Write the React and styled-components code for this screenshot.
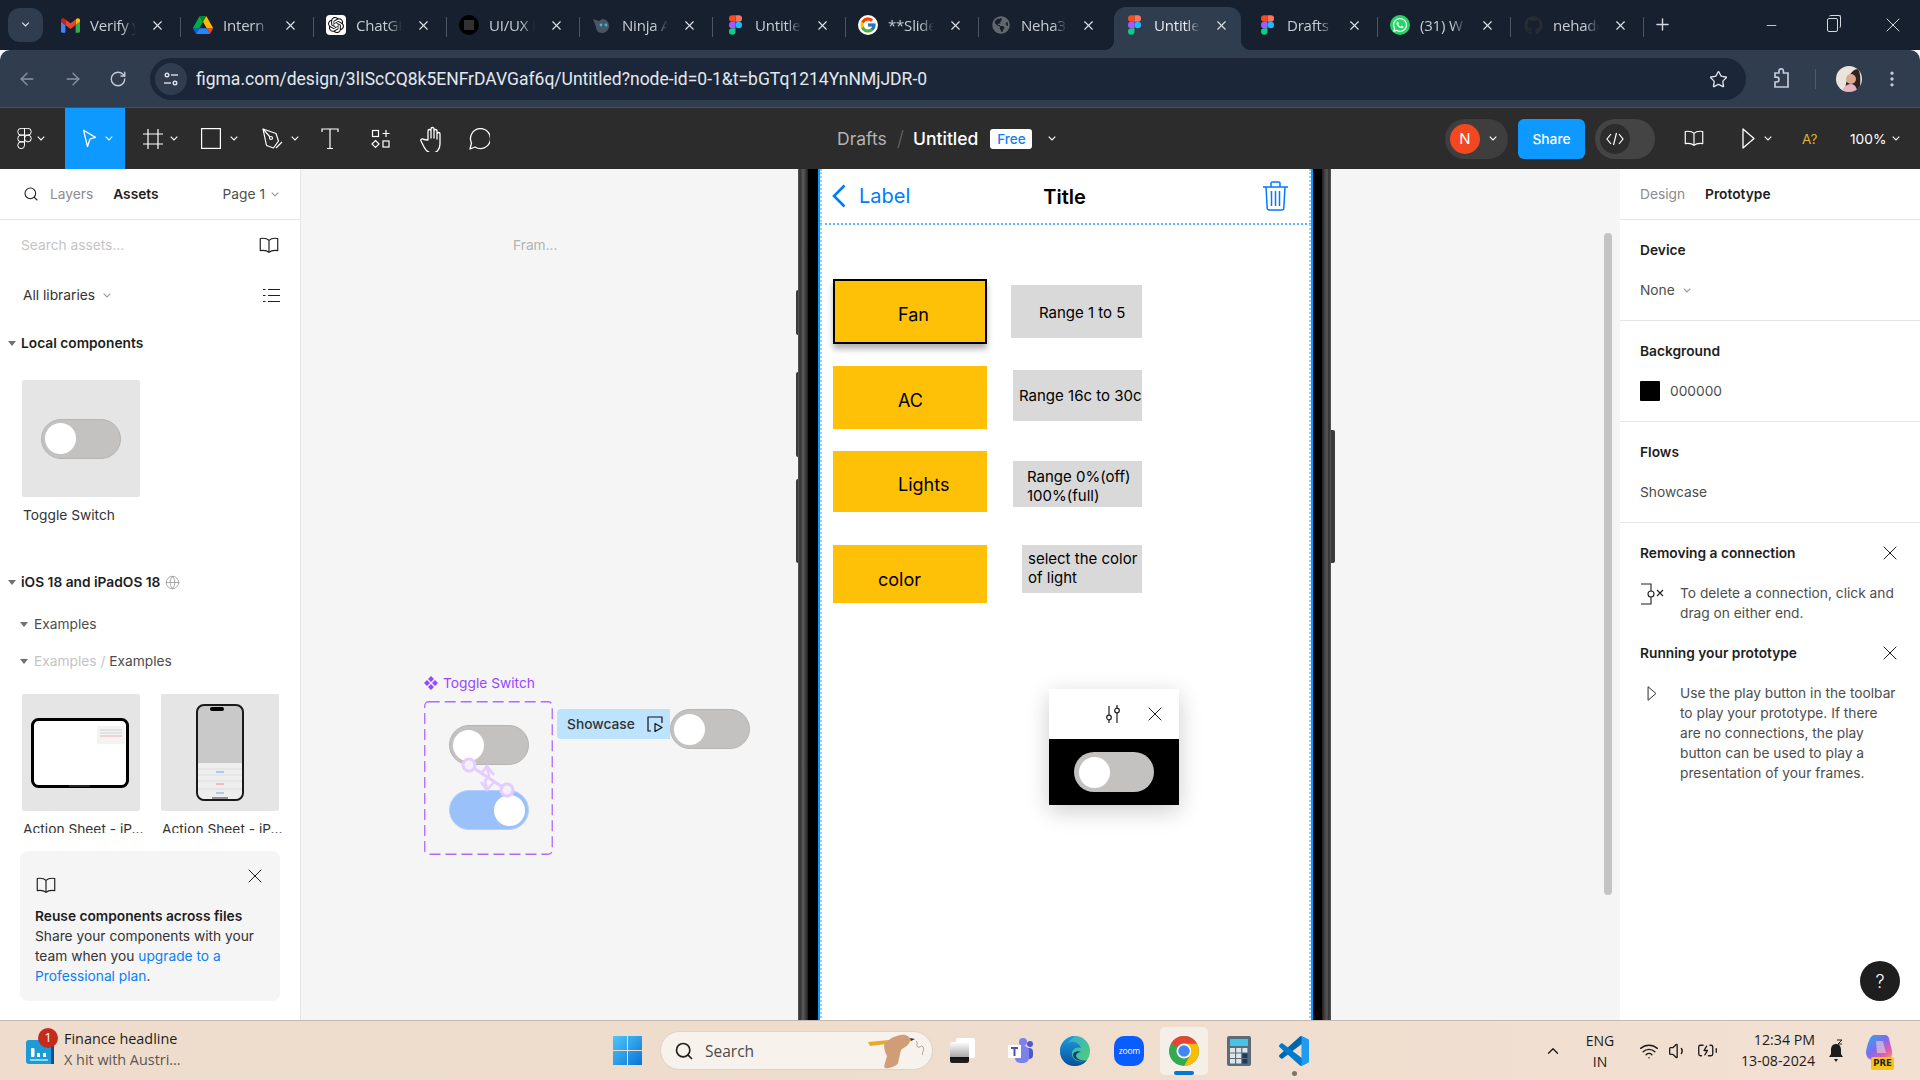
import React from "react";
import styled, { createGlobalStyle, css } from "styled-components";
import { ArrowLeft, ArrowRight, RotateCw, Star, MoreVertical, Plus, Minus, X, Search, Wifi, Volume1, BatteryCharging, ChevronUp, Globe } from "lucide-react";
import { FcGoogle } from "react-icons/fc";
import { SiOpenai } from "react-icons/si";
import { FaWhatsapp, FaGithub, FaGlobeAmericas } from "react-icons/fa";

const Global = createGlobalStyle`
  html, body { margin: 0; padding: 0; width: 1920px; height: 1080px; overflow: hidden; background: #f5f5f5; }
  * { box-sizing: border-box; }
  svg { display: block; flex: none; }
`;

const UI = `Inter, "Liberation Sans", sans-serif`;
const SYS = `"Open Sans", "Noto Sans", sans-serif`;

const Page = styled.div`
  width: 1920px; height: 1080px; display: flex; flex-direction: column; overflow: hidden; font-family: ${UI};
`;

/* ---------- Chrome tab strip ---------- */
const TabStrip = styled.div`
  height: 50px; flex: none; background: #16202f; display: flex; align-items: center; padding-left: 8px;
`;
const TabMenu = styled.div`
  width: 35px; height: 34px; border-radius: 12px; background: #303d4f; display: flex; align-items: center; justify-content: center; margin-right: 5px; margin-top: -1px;
`;
const Tab = styled.div`
  width: 133px; height: 43px; margin-top: 7px; position: relative; display: flex; align-items: center; padding: 0 0 7px 12px; color: #c7cdd6;
  ${p => p.$sep && css`
    &::after { content: ""; position: absolute; right: 0; top: 10px; height: 20px; width: 1px; background: #4b5665; }
  `}
  ${p => p.$active && css`
    color: #e6eaef; background: #303d4f; border-radius: 12px 12px 0 0; padding-left: 10px; width: 127px; margin: 7px 4px 0 2px;
    &::before { content: ""; position: absolute; left: -10px; bottom: 0; width: 10px; height: 10px; background: radial-gradient(circle at 0 0, #16202f 10px, #303d4f 10.5px); }
    &::after { content: ""; position: absolute; right: -10px; bottom: 0; width: 10px; height: 10px; background: radial-gradient(circle at 100% 0, #16202f 10px, #303d4f 10.5px); }
  `}
`;
const TabIcon = styled.span`
  width: 20px; height: 20px; flex: none; display: flex; align-items: center; justify-content: center;
`;
const TabTitle = styled.span`
  width: 46px; margin-left: 10px; font: 15px/20px ${SYS}; white-space: nowrap; letter-spacing: -.2px;
  -webkit-mask-image: linear-gradient(to right, #000 70%, transparent 100%); mask-image: linear-gradient(to right, #000 70%, transparent 100%);
`;
const TabClose = styled.span`
  margin-left: 14px; display: flex; color: #dfe3e8;
`;
const WindowControls = styled.div`
  margin-left: auto; display: flex; align-items: center; color: #d5d9df; height: 100%; padding-right: 20px; gap: 48px;
`;
const NewTab = styled.span`
  display: flex; color: #d5d9df; margin-left: 9px; margin-top: -1px;
`;
const Restore = styled.span`
  width: 11px; height: 14px; border: 1.4px solid #d5d9df; border-radius: 2px; position: relative; display: block;
  &::after { content: ""; position: absolute; top: -4px; left: 1px; right: -4px; bottom: 3px; border-top: 1.4px solid #d5d9df; border-right: 1.4px solid #d5d9df; border-radius: 2px; }
`;

/* ---------- Omnibox ---------- */
const Omni = styled.div`
  height: 58px; flex: none; background: #303d4f; border-radius: 10px 10px 0 0; border-bottom: 1px solid #4b5058; display: flex; align-items: flex-start; padding-top: 8px; color: #8a94a2;
`;
const NavIcons = styled.div`
  width: 150px; height: 42px; flex: none; display: flex; align-items: center; padding-left: 17px; gap: 26px;
`;
const AddressBar = styled.div`
  width: 1596px; height: 42px; border-radius: 21px; background: #1b2738; display: flex; align-items: center; padding: 0 18px 0 5px; flex: none;
`;
const SiteChip = styled.div`
  width: 32px; height: 32px; border-radius: 50%; background: #303d4f; display: flex; align-items: center; justify-content: center; flex: none; margin-right: 9px;
`;
const Url = styled.div`
  flex: 1; color: #e4e8ee; font: 17.5px/22px Roboto, sans-serif; letter-spacing: 0; white-space: nowrap;
`;
const BrowserActions = styled.div`
  height: 42px; flex: 1; display: flex; align-items: center; padding-left: 26px; color: #c5ccd6;
`;
const ActionSep = styled.span`
  width: 1px; height: 20px; background: #4f5b6b; margin: 0 20px 0 23px;
`;
const Avatar = styled.span`
  width: 26px; height: 26px; border-radius: 50%; overflow: hidden; display: block; margin-right: 20px; flex: none;
`;

/* ---------- Figma toolbar ---------- */
const FigmaBar = styled.div`
  height: 61px; flex: none; background: #2c2c2c; display: grid; grid-template-columns: 837px 608px 475px; align-items: center; color: #fff;
`;
const Tools = styled.div`
  display: flex; align-items: center; height: 61px;
`;
const ToolCell = styled.div`
  width: ${p => p.$w}px; height: 61px; padding-left: ${p => p.$pl}px; gap: ${p => p.$gap ?? 8}px; display: flex; align-items: center; flex: none; background: ${p => (p.$active ? "#0d99ff" : "transparent")};
`;
const Crumbs = styled.div`
  display: flex; align-items: center; font-size: 17.5px;
`;
const CrumbMuted = styled.span`
  color: #b3b3b3;
`;
const CrumbSlash = styled.span`
  color: #5f5f5f; margin: 0 9px 0 10px; font-weight: 300; font-size: 21px;
`;
const CrumbTitle = styled.span`
  color: #fff; font-weight: 500;
`;
const FreeBadge = styled.span`
  width: 42px; height: 20px; background: #fff; color: #0d7ff2; border-radius: 3px; font-size: 13.5px; font-weight: 500; display: flex; align-items: center; justify-content: center; margin: 0 16px 0 12px;
`;
const RightTools = styled.div`
  display: flex; align-items: center; height: 61px;
`;
const UserPill = styled.div`
  width: 63px; height: 40px; border-radius: 20px; background: #3e3e3e; display: flex; align-items: center; padding-left: 5px; gap: 9px; flex: none;
`;
const UserDot = styled.span`
  width: 30px; height: 30px; border-radius: 50%; background: #f24822; color: #fff; font-size: 15px; display: flex; align-items: center; justify-content: center;
`;
const ShareBtn = styled.div`
  width: 67px; height: 40px; border-radius: 6px; background: #0d99ff; color: #fff; font-size: 13.75px; font-weight: 500; display: flex; align-items: center; justify-content: center; margin: 0 10px; flex: none;
`;
const CodeToggle = styled.div`
  width: 60px; height: 40px; border-radius: 20px; background: #444; display: flex; align-items: center; padding-left: 5px; flex: none;
`;
const CodeKnob = styled.span`
  width: 30px; height: 30px; border-radius: 50%; background: #2c2c2c; color: #fff; display: flex; align-items: center; justify-content: center;
`;
const AskBadge = styled.span`
  color: #e0b32c; font-size: 13.5px; margin-left: 24px; width: 19px;
`;
const ZoomText = styled.span`
  color: #fff; font-size: 13.75px; margin-left: 29px; margin-right: 6px;
`;

/* ---------- Workspace ---------- */
const Workspace = styled.div`
  flex: 1; display: flex; min-height: 0;
`;
const SidePanel = styled.aside`
  width: ${p => p.$w}px; flex: none; background: #fff; position: relative; color: #333; font-size: 13.75px;
  ${p => p.$left ? "border-right: 1px solid #e6e6e6;" : ""}
`;
const PanelHead = styled.div`
  height: 51px; border-bottom: 1.5px solid #e6e6e6; display: flex; align-items: center; padding-left: ${p => p.$pl}px;
`;
const TabLabel = styled.span`
  color: ${p => (p.$on ? "#1e1e1e" : "#8c8c8c")}; font-weight: ${p => (p.$on ? 600 : 400)}; margin-left: ${p => p.$ml ?? 0}px;
`;
const PageSelect = styled.span`
  margin-left: auto; margin-right: 21px; color: #4d4d4d; display: flex; align-items: center; gap: 6px;
`;
const ToolRow = styled.div`
  height: 50px; display: flex; align-items: center; justify-content: space-between; padding: 0 20px 0 ${p => p.$pl ?? 22}px;
`;
const Placeholder = styled.span`
  color: #c4c4c4;
`;
const LibSelect = styled.span`
  color: #333; display: flex; align-items: center; gap: 8px;
`;
const TreeHead = styled.div`
  height: ${p => p.$h ?? 24}px; margin-top: ${p => p.$mt ?? 0}px; padding-left: ${p => p.$pl ?? 8}px; display: flex; align-items: center; gap: ${p => p.$gap ?? 5}px; font-weight: ${p => (p.$bold ? 600 : 400)}; color: ${p => (p.$bold ? "#1e1e1e" : "#4d4d4d")};
`;
const Caret = styled.span`
  width: 0; height: 0; border-left: 4px solid transparent; border-right: 4px solid transparent; border-top: 5px solid #707070; flex: none;
`;
const Faint = styled.span`
  color: #c4c4c4;
`;
const AssetGrid = styled.div`
  display: flex; gap: 21px; padding-left: 22px; margin-top: ${p => p.$mt}px; height: ${p => p.$h}px; overflow: hidden;
`;
const AssetCard = styled.div`
  width: 118px; flex: none;
`;
const AssetThumb = styled.div`
  width: 118px; height: 117px; background: #e5e5e5; border-radius: 2px; display: flex; align-items: center; justify-content: center;
`;
const AssetName = styled.div`
  margin: 10px 0 0 1px; line-height: 16px; white-space: nowrap; color: #333; width: 120px;
`;
const TipCard = styled.div`
  margin: 18px 20px 0; height: 150px; border-radius: 8px; background: #f5f5f5; padding: 26px 15px 0; position: relative; line-height: 20px;
`;
const TipClose = styled.span`
  position: absolute; right: 18px; top: 18px; color: #1e1e1e;
`;
const TipTitle = styled.div`
  font-weight: 600; color: #1e1e1e; margin-top: 12px; white-space: nowrap;
`;
const TipLink = styled.span`
  color: #0d7ff2;
`;

/* right panel */
const PropSection = styled.section`
  padding: 20px 20px; border-bottom: 1.5px solid #e6e6e6; display: flex; flex-direction: column; gap: 20px; line-height: 20px;
`;
const PropTitle = styled.div`
  font-weight: 600; color: #1e1e1e;
`;
const PropValue = styled.div`
  color: #4d4d4d; display: flex; align-items: center; gap: ${p => p.$gap ?? 8}px;
`;
const Swatch = styled.span`
  width: 20px; height: 20px; background: #000; border-radius: 1px;
`;
const HintHead = styled.div`
  display: flex; align-items: center; justify-content: space-between; padding: ${p => p.$pt}px 23px 0 20px; font-weight: 600; color: #1e1e1e; line-height: 20px;
`;
const HintBody = styled.div`
  display: grid; grid-template-columns: 40px 1fr; padding: 20px 20px 0; line-height: 20px; color: #4d4d4d; white-space: nowrap;
`;
const HintIcon = styled.span`
  display: block; margin: ${p => p.$mt ?? 0}px 0 0 ${p => p.$ml ?? 0}px;
`;
const HelpBtn = styled.div`
  position: absolute; right: 20px; bottom: 19px; width: 40px; height: 40px; border-radius: 50%; background: #1e1e1e; color: #fff; font-size: 18px; font-weight: 300; display: flex; align-items: center; justify-content: center;
`;

/* ---------- Canvas ---------- */
const Canvas = styled.main`
  flex: 1; position: relative; background: #f5f5f5; overflow: hidden;
`;
const Node = styled.div`
  position: absolute; left: ${p => p.$x}px; top: ${p => p.$y}px;
`;
const FrameName = styled(Node)`
  color: #b3b3b3; font-size: 13.75px; line-height: 16px;
`;
const ComponentLabel = styled(Node)`
  color: #9747ff; font-size: 13.75px; line-height: 18px; display: flex; align-items: center; gap: 5px;
`;
const VariantSet = styled(Node)`
  width: 129px; height: 154px; display: flex; flex-direction: column; align-items: center; padding-top: 24px; gap: 25px;
`;
const DashOutline = styled.svg`
  position: absolute; left: 0; top: 0;
`;
const Toggle = styled.div`
  width: 80px; height: 40px; border-radius: 20px; flex: none; padding: 0 ${p => (p.$plain ? 5 : 3)}px; display: flex; align-items: center;
  justify-content: ${p => (p.$on ? "flex-end" : "flex-start")};
  background: ${p => (p.$on ? "#9bc1fb" : "#c4c2c0")};
  border: ${p => (p.$plain ? "none" : `1px solid ${p.$on ? "#b4d1fd" : "#b7b5b3"}`)};
`;
const Knob = styled.span`
  width: 31px; height: 31px; border-radius: 50%; background: #fff;
`;
const Connector = styled.svg`
  position: absolute; left: ${p => p.$x}px; top: ${p => p.$y}px;
`;
const FlowTag = styled(Node)`
  width: 113px; height: 30px; background: #bde3ff; border-radius: 4px 0 0 4px; padding: 0 7px 0 10px; display: flex; align-items: center; justify-content: space-between; color: #333; font-weight: 500; font-size: 13.75px;
`;

const Phone = styled(Node)`
  width: 533px; height: 860px; display: flex; padding: 0 9px 0 10px; background: linear-gradient(to right, #5a5a5a 0, #303030 2px, #5c5c5c 5px, #383838 8px, #1c1c1c 10px, #1c1c1c calc(100% - 9px), #3a3a3a calc(100% - 7px), #585858 calc(100% - 4px), #2e2e2e calc(100% - 2px), #5a5a5a 100%);
`;
const PhoneBlack = styled.div`
  flex: 1; background: #000; padding: 0 9px 0 10px; display: flex;
`;
const Screen = styled.div`
  flex: 1; background: #fff; border-left: 2px solid #0d99ff; border-right: 2px solid #0d99ff; position: relative; display: flex; flex-direction: column;
  &::after { content: ""; position: absolute; inset: 0; border-left: 2px dotted #8ed0ff; border-right: 2px dotted #8ed0ff; pointer-events: none; }
`;
const SideKey = styled(Node)`
  width: 4px; height: ${p => p.$h}px; background: #3a3a3a; border-radius: ${p => (p.$right ? "0 2px 2px 0" : "2px 0 0 2px")};
`;
const NavBar = styled.div`
  height: 56px; border-bottom: 2px dotted #56b4f5; display: grid; grid-template-columns: 1fr auto 1fr; align-items: center; padding: 0 14px 0 12px; color: #007aff; flex: none;
`;
const NavBack = styled.div`
  display: flex; align-items: center; gap: 13px; font-size: 20px;
`;
const NavTitle = styled.div`
  color: #000; font-size: 20px; font-weight: 600; padding-top: 1px;
`;
const NavTrash = styled.div`
  justify-self: end; margin-right: 9px;
`;
const PresetBtn = styled(Node)`
  width: 154px; height: ${p => p.$h}px; background: #ffc107; color: #000; font-size: 18px; display: flex; align-items: center; padding-left: ${p => p.$pl}px; padding-top: ${p => p.$pt}px;
  ${p => p.$sel && css`border: 2px solid #000; box-shadow: 0 5px 6px rgba(0,0,0,.3);`}
`;
const RangeNote = styled(Node)`
  width: ${p => p.$w}px; height: ${p => p.$h}px; background: #d9d9d9; color: #000; font-size: 15px; line-height: 19px; display: flex; align-items: center; padding: ${p => p.$pt ?? 0}px 0 ${p => p.$pb ?? 0}px ${p => p.$pl}px; white-space: pre;
`;
const PreviewPopup = styled(Node)`
  width: 130px; height: 116px; box-shadow: 0 6px 22px rgba(0,0,0,.2); display: flex; flex-direction: column;
`;
const PopupHead = styled.div`
  height: 50px; background: #fff; display: flex; align-items: center; justify-content: flex-end; gap: 27px; padding-right: 17px; color: #1e1e1e;
`;
const PopupBody = styled.div`
  flex: 1; background: #000; display: flex; align-items: center; justify-content: center;
`;
const Scrollbar = styled(Node)`
  width: 8px; height: 662px; border-radius: 4px; background: #c4c4c4;
`;

/* ---------- Taskbar ---------- */
const Taskbar = styled.footer`
  height: 60px; flex: none; display: flex; align-items: center; background: linear-gradient(90deg, #efdccc, #eedccd 40%, #f2e1d2); border-top: 1px solid #c7b8ab; padding-left: 26px; color: #1c1c1c; font-family: ${SYS};
`;
const NewsWidget = styled.div`
  width: 587px; display: flex; align-items: center; flex: none;
`;
const NewsIcon = styled.div`
  position: relative; width: 28px; height: 24px; margin-right: 10px; margin-top: 2px;
`;
const NewsBadge = styled.span`
  position: absolute; left: 12px; top: -12px; width: 20px; height: 20px; border-radius: 50%; background: #c42b1c; color: #fff; font-size: 12.5px; display: flex; align-items: center; justify-content: center;
`;
const NewsText = styled.div`
  font-size: 14.4px; line-height: 20.5px; white-space: nowrap; margin-top: -2px;
`;
const NewsSub = styled.div`
  color: #5c5650;
`;
const SearchPill = styled.div`
  width: 273px; height: 39px; border-radius: 20px; background: #f8f2ec; border: 1px solid #ddd2c8; margin-left: 18px; display: flex; align-items: center; padding-left: 13px; flex: none; font-size: 15.5px; color: #4a4a4a; gap: 11px;
`;
const PillArt = styled.span`
  margin-left: auto; margin-right: 6px;
`;
const TaskItems = styled.div`
  display: flex; gap: 6.8px; margin-left: 5px;
`;
const TaskItem = styled.div`
  width: 48px; height: 48px; border-radius: 5px; position: relative; display: flex; align-items: center; justify-content: center; margin-right: ${p => p.$mr ?? 0}px; background: ${p => (p.$active ? "#f6efe8" : "transparent")};
  ${p => p.$active && css`&::after { content: ""; position: absolute; left: 14px; bottom: 0; width: 20px; height: 4px; border-radius: 2px; background: #0078d4; }`}
  ${p => p.$open && css`&::after { content: ""; position: absolute; left: 22px; bottom: -1px; width: 5px; height: 5px; border-radius: 50%; background: #7a7570; }`}
`;
const Tray = styled.div`
  margin-left: auto; display: flex; align-items: center; padding-right: 27px; color: #1c1c1c;
`;
const Lang = styled.div`
  width: 40px; margin: 0 19px 0 18px; text-align: center; font-size: 14px; line-height: 21px;
`;
const Clock = styled.div`
  width: 90px; margin: -2px 13px 0 0; text-align: right; font-size: 14.2px; line-height: 21px; white-space: nowrap;
`;
const TrayGroup = styled.div`
  display: flex; align-items: center; gap: 9px; width: 86px;
`;
const Copilot = styled.div`
  position: relative; width: 28px; height: 32px; margin-left: 21px;
`;
const PreBadge = styled.span`
  position: absolute; left: 6px; bottom: -3px; width: 23px; height: 13px; background: #f5c518; border-radius: 2px; font: 700 8.5px/13px "DejaVu Sans", sans-serif; color: #222; text-align: center;
`;

/* ---------- Icons ---------- */
const Chev = ({ c = "#fff", w = 8 }) => (
  <svg width={w} height={5} viewBox="0 0 8 5" fill="none"><path d="M.7.7 4 4l3.3-3.3" stroke={c} strokeWidth="1.1" /></svg>
);
const Gmail = () => (
  <svg width="19" height="15" viewBox="0 0 24 18">
    <path d="M1.6 18H5.5V8.5L0 4.4V16.4C0 17.3.7 18 1.6 18z" fill="#4285F4" />
    <path d="M18.5 18h3.9c.9 0 1.6-.7 1.6-1.6V4.4l-5.5 4.1z" fill="#34A853" />
    <path d="M18.5 1.4v7.1L24 4.4V2.2c0-2-2.3-3.2-3.9-2z" fill="#FBBC04" />
    <path d="M5.5 8.5V1.4L12 6.3l6.5-4.9v7.1L12 13.4z" fill="#EA4335" />
    <path d="M0 2.2v2.2l5.5 4.1V1.4L3.9.2C2.3-1 0 .2 0 2.2z" fill="#C5221F" />
  </svg>
);
const Drive = () => (
  <svg width="20" height="18" viewBox="0 0 87.3 78">
    <path d="m6.6 66.85 3.85 6.65c.8 1.4 1.95 2.5 3.3 3.3l13.75-23.8h-27.5c0 1.55.4 3.1 1.2 4.5z" fill="#0066da" />
    <path d="m43.65 25-13.75-23.8c-1.35.8-2.5 1.9-3.3 3.3l-25.4 44a9.06 9.06 0 0 0 -1.2 4.5h27.5z" fill="#00ac47" />
    <path d="m73.55 76.8c1.35-.8 2.5-1.9 3.3-3.3l1.6-2.75 7.65-13.25c.8-1.4 1.2-2.95 1.2-4.5h-27.502l5.852 11.5z" fill="#ea4335" />
    <path d="m43.65 25 13.75-23.8c-1.35-.8-2.9-1.2-4.5-1.2h-18.5c-1.6 0-3.15.45-4.5 1.2z" fill="#00832d" />
    <path d="m59.8 53h-32.3l-13.75 23.8c1.35.8 2.9 1.2 4.5 1.2h50.8c1.6 0 3.15-.45 4.5-1.2z" fill="#2684fc" />
    <path d="m73.4 26.5-12.7-22c-.8-1.4-1.95-2.5-3.3-3.3l-13.75 23.8 16.15 28h27.45c0-1.55-.4-3.1-1.2-4.5z" fill="#ffba00" />
  </svg>
);
const FigmaColor = () => (
  <svg width="13" height="20" viewBox="0 0 38 57">
    <path d="M19 28.5a9.5 9.5 0 1 1 19 0 9.5 9.5 0 0 1-19 0z" fill="#1ABCFE" />
    <path d="M0 47.5A9.5 9.5 0 0 1 9.5 38H19v9.5a9.5 9.5 0 1 1-19 0z" fill="#0ACF83" />
    <path d="M19 0v19h9.5a9.5 9.5 0 1 0 0-19H19z" fill="#FF7262" />
    <path d="M0 9.5A9.5 9.5 0 0 0 9.5 19H19V0H9.5A9.5 9.5 0 0 0 0 9.5z" fill="#F24E1E" />
    <path d="M0 28.5A9.5 9.5 0 0 0 9.5 38H19V19H9.5A9.5 9.5 0 0 0 0 28.5z" fill="#A259FF" />
  </svg>
);
const FigmaLine = () => (
  <svg width="15" height="21" viewBox="-1 -1 40 59" fill="none" stroke="#fff" strokeWidth="2.8">
    <path d="M19 28.5a9.5 9.5 0 1 1 19 0 9.5 9.5 0 0 1-19 0z" />
    <path d="M0 47.5A9.5 9.5 0 0 1 9.5 38H19v9.5a9.5 9.5 0 1 1-19 0z" />
    <path d="M19 0v19h9.5a9.5 9.5 0 1 0 0-19H19z" />
    <path d="M0 9.5A9.5 9.5 0 0 0 9.5 19H19V0H9.5A9.5 9.5 0 0 0 0 9.5z" />
    <path d="M0 28.5A9.5 9.5 0 0 0 9.5 38H19V19H9.5A9.5 9.5 0 0 0 0 28.5z" />
  </svg>
);
const OpenAiTile = styled.span`
  width: 20px; height: 20px; border-radius: 4px; background: #fff; color: #111; display: flex; align-items: center; justify-content: center;
`;
const DotsTile = () => (
  <svg width="20" height="20" viewBox="0 0 20 20">
    <circle cx="10" cy="10" r="10" fill="#000" />
    {[6, 8, 10, 12, 14].flatMap(x => [6, 8, 10, 12, 14].map(y => <circle key={x + "-" + y} cx={x} cy={y} r=".7" fill="#8b8b8b" />))}
  </svg>
);
const NinjaIcon = () => (
  <svg width="20" height="18" viewBox="0 0 20 18">
    <path d="M1 3l6 2 3-2c4 0 7 3 7 7 0 4-3 7-7 7-4 0-6-3-6-6L1 3z" fill="#4a5562" />
    <circle cx="9" cy="9" r="1.4" fill="#39b8e6" /><circle cx="14" cy="9" r="1.4" fill="#39b8e6" />
  </svg>
);
const GoogleTile = styled.span`
  width: 20px; height: 20px; border-radius: 50%; background: #fff; display: flex; align-items: center; justify-content: center;
`;
const WaTile = styled.span`
  width: 20px; height: 20px; border-radius: 50%; background: #25d366; color: #fff; display: flex; align-items: center; justify-content: center;
`;
const Tune = () => (
  <svg width="16" height="16" viewBox="0 0 16 16" fill="none" stroke="#dfe3e8" strokeWidth="1.4">
    <circle cx="4" cy="4" r="1.8" /><path d="M8 4h7" /><circle cx="12" cy="12" r="1.8" /><path d="M1 12h7" />
  </svg>
);
const Puzzle = () => (
  <svg width="20" height="22" viewBox="0 0 20 22" fill="none" stroke="#c5ccd6" strokeWidth="1.7">
    <path d="M3 5h4V3a2.2 2.2 0 0 1 4.4 0v2h4.6v14H3v-5h1.6a2.4 2.4 0 0 0 0-4.800H3z" />
  </svg>
);
const Portrait = () => (
  <svg width="26" height="26" viewBox="0 0 26 26">
    <rect width="26" height="26" fill="#e9e4dc" />
    <path d="M10 26c-1-6 0-10 2-13 1-5 6-10 10-10 3 4 3 15 1 23z" fill="#2e2320" />
    <circle cx="15" cy="13" r="5" fill="#dba98f" />
    <path d="M6 26c1-5 5-8 9-8s6 4 6 8z" fill="#e7b5c2" />
  </svg>
);
const Cursor = () => (
  <svg width="15" height="19" viewBox="0 0 15 19" fill="none" stroke="#fff" strokeWidth="1.3" strokeLinejoin="round">
    <path d="M1.500 1.200 13.500 8.400 8 10 5.500 17.500z" />
  </svg>
);
const FrameTool = () => (
  <svg width="20" height="20" viewBox="0 0 20 20" fill="none" stroke="#fff" strokeWidth="1.200"><path d="M5 0v20M15 0v20M0 5h20M0 15h20" /></svg>
);
const RectTool = () => (
  <svg width="20" height="21" viewBox="0 0 20 21" fill="none" stroke="#fff" strokeWidth="1.200"><rect x=".6" y=".6" width="18.800" height="19.800" /></svg>
);
const PenTool = () => (
  <svg width="21" height="21" viewBox="0 0 21 21" fill="none" stroke="#fff" strokeWidth="1.200" strokeLinejoin="round">
    <path d="M1 1l13 4.500 2.500 7.500-5 7-7-2.500z" /><path d="M1 1l7 8" /><circle cx="9" cy="10" r="1.500" /><path d="M14 20l6-6" />
  </svg>
);
const TextTool = () => (
  <svg width="18" height="21" viewBox="0 0 18 21" fill="none" stroke="#fff" strokeWidth="1.200"><path d="M1 4V1h16v3M9 1v19.500M6 20.500h6" /></svg>
);
const ComponentsTool = () => (
  <svg width="20" height="20" viewBox="0 0 20 20" fill="none" stroke="#fff" strokeWidth="1.200">
    <rect x="1.500" y="1.500" width="6" height="6" /><path d="M15 1v7M11.500 4.500h7" />
    <path d="M4.500 11.500 8 15l-3.500 3.500L1 15z" /><rect x="12" y="12" width="6" height="6" />
  </svg>
);
const HandTool = () => (
  <svg width="24" height="26" viewBox="0 0 24 26" fill="none" stroke="#fff" strokeWidth="1.300" strokeLinejoin="round" strokeLinecap="round">
    <path d="M8 14V5a1.500 1.500 0 0 1 3 0v7-9a1.500 1.500 0 0 1 3 0v9-7a1.500 1.500 0 0 1 3 0v8-5a1.500 1.500 0 0 1 3 0v10c0 5-3 9-8 9-4 0-6-2-8-6l-3-6c-.8-1.500 1.500-3 3-1.500z" />
  </svg>
);
const CommentTool = () => (
  <svg width="23" height="23" viewBox="0 0 23 23" fill="none" stroke="#fff" strokeWidth="1.300" strokeLinejoin="round">
    <path d="M3 22l1.500-6A10 10 0 1 1 8 20z" />
  </svg>
);
const Book = ({ c = "#1e1e1e", w = 22 }) => (
  <svg width={w} height={w * .75} viewBox="0 0 22 17" fill="none" stroke={c} strokeWidth="1.200" strokeLinejoin="round">
    <path d="M11 3.500C9 1.500 5.500 1 2 1.500v12.500c3.500-.5 7 0 9 1.800 2-1.800 5.500-2.300 9-1.800V1.500c-3.500-.5-7 0-9 2zM11 3.500v12.300" />
  </svg>
);
const PlayIcon = ({ c = "#fff", w = 13, h = 21 }) => (
  <svg width={w} height={h} viewBox="0 0 13 21" fill="none" stroke={c} strokeWidth="1.300" strokeLinejoin="round"><path d="M1 1l11 9.500L1 20z" /></svg>
);
const CodeIcon = () => (
  <svg width="18" height="14" viewBox="0 0 18 14" fill="none" stroke="#fff" strokeWidth="1.200"><path d="M5 2 1 7l4 5M13 2l4 5-4 5M10.500 1 7.500 13" /></svg>
);
const ListIcon = () => (
  <svg width="17" height="15" viewBox="0 0 17 15" fill="none" stroke="#1e1e1e" strokeWidth="1.200"><path d="M5 1.500h12M5 7.500h12M5 13.500h12M0 1.500h2.500M0 7.500h2.500M0 13.500h2.500" /></svg>
);
const GlobeSmall = () => <Globe size={15} color="#999" strokeWidth={1.3} />;
const Thin = ({ s = 15, c = "currentColor" }) => (
  <svg width={s} height={s} viewBox="0 0 14 14" fill="none" stroke={c} strokeWidth="1"><path d="M.7.7l12.600 12.600M13.300.7.700 13.300" /></svg>
);
const IPad = () => (
  <svg width="118" height="117" viewBox="0 0 118 117">
    <rect x="10.500" y="25.500" width="95" height="67" rx="6" fill="#fff" stroke="#000" strokeWidth="3" />
    <rect x="75" y="32" width="28" height="18" rx="1" fill="#f4f4f4" />
    <path d="M78 36h22M78 39h22" stroke="#bbb" strokeWidth=".6" />
    <path d="M78 42h22" stroke="#f59a9a" strokeWidth=".8" />
    <path d="M47 92h21" stroke="#444" strokeWidth="1" />
  </svg>
);
const IPhone = () => (
  <svg width="118" height="117" viewBox="0 0 118 117">
    <rect x="36" y="11" width="46" height="95" rx="7" fill="#c9c9c9" stroke="#1a1a1a" strokeWidth="2" />
    <path d="M37 69h44v29a7 7 0 0 1-7 7H44a7 7 0 0 1-7-7z" fill="#eee" />
    <rect x="49" y="13" width="14" height="4" rx="2" fill="#000" />
    <path d="M37 75h44M37 81h44M37 87h44M37 95h44" stroke="#d5d5d5" strokeWidth=".6" />
    <path d="M55 78h8" stroke="#6aa2f0" /><path d="M55 90h8" stroke="#f08a8a" /><path d="M55 99h8" stroke="#6aa2f0" />
    <path d="M51 104h16" stroke="#333" />
  </svg>
);
const Diamonds = () => (
  <svg width="14" height="14" viewBox="0 0 14 14" fill="#9747ff">
    <path d="M7 0 10 3 7 6 4 3zM7 8 10 11 7 14 4 11zM3 4 6 7 3 10 0 7zM11 4 14 7 11 10 8 7z" />
  </svg>
);
const ShowcaseIcon = () => (
  <svg width="16" height="16" viewBox="0 0 16 16" fill="none" stroke="#111" strokeWidth="1.200" strokeLinejoin="round">
    <path d="M4 15H1V1h14v6" /><path d="M8 7.500 15 11.500 8 15.500z" />
  </svg>
);
const FlowLink = () => (
  <Connector $x={155} $y={584} width="62" height="46" viewBox="0 0 62 46" fill="none" stroke="#e4ccff">
    <path d="M13 12 51 37" strokeWidth="3" />
    <path d="M25 21 31 13l7 9M31 14l2 9-4 5 2 8M25 29l6 8 7-8" strokeWidth="2.500" />
    <circle cx="13" cy="12" r="6" fill="#f5eeff" strokeWidth="3" />
    <circle cx="51" cy="37" r="6" fill="#f5eeff" strokeWidth="3" />
  </Connector>
);
const BackChevron = () => (
  <svg width="14" height="24" viewBox="0 0 14 24" fill="none" stroke="#007aff" strokeWidth="2.600"><path d="M12.500 1.500 2 12l10.500 10.500" /></svg>
);
const Trash = () => (
  <svg width="25" height="30" viewBox="0 0 25 30" fill="none" stroke="#007aff" strokeWidth="1.500" strokeLinejoin="round">
    <path d="M0 6h25M8 6V2.500Q8 1 9.500 1h6Q17 1 17 2.500V6M3 6l1.200 21q.1 2 2 2h12.600q1.900 0 2-2L22 6M8.500 10v15M12.500 10v15M16.500 10v15" />
  </svg>
);
const Sliders = () => (
  <svg width="16" height="18" viewBox="0 0 16 18" fill="none" stroke="#1e1e1e" strokeWidth="1.200">
    <path d="M4 1v9M4 15v3M12 0v3M12 8v10" /><circle cx="4" cy="12.500" r="2.300" /><circle cx="12" cy="5.500" r="2.300" />
  </svg>
);
const DeleteConn = () => (
  <svg width="24" height="22" viewBox="0 0 24 22" fill="none" stroke="#1e1e1e" strokeWidth="1.100">
    <path d="M1 1h10v7M11 14v7H1" /><circle cx="11" cy="11" r="3" /><path d="M17 7l6 6M23 7l-6 6" />
  </svg>
);
const NewsGlyph = () => (
  <svg width="28" height="24" viewBox="0 0 28 24">
    <rect width="28" height="24" rx="3" fill="#1e9bd7" />
    <rect x="25" y="0" width="3" height="24" fill="#0f4f8f" />
    <rect x="5" y="8" width="3.500" height="9" rx="1" fill="#fff" /><rect x="11" y="13" width="3" height="4" fill="#fff" /><rect x="17" y="13" width="3" height="4" fill="#fff" />
    <rect x="4" y="19" width="18" height="2" fill="#7fe0f5" />
  </svg>
);
const WinLogo = () => (
  <svg width="29" height="29" viewBox="0 0 29 29">
    <defs><linearGradient id="w" x1="0" y1="0" x2="1" y2="1"><stop offset="0" stopColor="#4fc7f8" /><stop offset="1" stopColor="#0a74d6" /></linearGradient></defs>
    <path d="M0 0h14v14H0zM15 0h14v14H15zM0 15h14v14H0zM15 15h14v14H15z" fill="url(#w)" />
  </svg>
);
const HandArt = () => (
  <svg width="58" height="36" viewBox="0 0 58 36">
    <path d="M0 9 42 5l1 3L2 13z" fill="#e8a92e" />
    <path d="M42 5l5 1-4 2z" fill="#333" />
    <path d="M16 12c2-4 9-9 17-10 5-1 10 2 9 6-1 5-6 6-9 9l-3 13c-1 3-9 6-13 5-2-1 1-8 2-12-2-3-3-8-3-11z" fill="#cf9e79" />
    <path d="M48 8c3 2-1 5 2 6s3-3 5 0-2 6 0 8" fill="none" stroke="#a99" strokeWidth="1" />
  </svg>
);
const TaskView = () => (
  <svg width="25" height="25" viewBox="0 0 25 25">
    <defs><linearGradient id="tv" x1="0" y1="0" x2="0" y2="1"><stop offset="0" stopColor="#fff" /><stop offset=".7" stopColor="#aaa" /><stop offset=".72" stopColor="#111" /><stop offset="1" stopColor="#222" /></linearGradient></defs>
    <rect x="6" y="0" width="19" height="20" rx="2" fill="#fff" />
    <rect x="0" y="4" width="19" height="21" rx="2" fill="url(#tv)" />
  </svg>
);
const Teams = () => (
  <svg width="28" height="28" viewBox="0 0 28 28">
    <circle cx="17" cy="5" r="4" fill="#7b83eb" /><circle cx="24" cy="7" r="3" fill="#5059c9" />
    <rect x="19" y="11" width="8" height="11" rx="4" fill="#5059c9" />
    <rect x="9" y="9" width="14" height="17" rx="5" fill="#7b83eb" />
    <rect x="2" y="8" width="13" height="13" fill="#fff" />
    <path d="M5 11h7M8.500 11v8" stroke="#4b53bc" strokeWidth="2" />
  </svg>
);
const Edge = () => (
  <svg width="30" height="30" viewBox="0 0 30 30">
    <defs>
      <linearGradient id="e1" x1="0" y1="0" x2="1" y2="1"><stop offset="0" stopColor="#2fa7e0" /><stop offset="1" stopColor="#56d26b" /></linearGradient>
      <linearGradient id="e2" x1="0" y1="0" x2="0" y2="1"><stop offset="0" stopColor="#1e9be0" /><stop offset="1" stopColor="#0a4f9e" /></linearGradient>
    </defs>
    <circle cx="15" cy="15" r="15" fill="url(#e1)" />
    <path d="M15 0C7 0 0 7 0 15c0 9 7 15 14 15 6 0 10-2 13-6-6 3-14 1-15-5-1-5 4-9 9-7-2-5-7-8-13-5 3-4 7-7 7-7z" fill="url(#e2)" />
    <path d="M21 16c-3-2-8 0-8 3 0 5 8 7 14 5-4 1-10 0-11-4 0-2 2-4 5-4z" fill="#0c3f86" />
  </svg>
);
const ZoomTile = styled.span`
  width: 30px; height: 30px; border-radius: 10px; background: #0b5cff; color: #fff; font: 500 8.5px/30px "Open Sans", sans-serif; text-align: center; letter-spacing: -.2px;
`;
const ChromeLogo = () => (
  <svg width="30" height="30" viewBox="2 2 44 44">
    <circle cx="24" cy="24" r="22" fill="#34a853" />
    <path d="M43.050 13A22 22 0 0 1 24 46L33.530 29.500A11 11 0 0 0 24 13Z" fill="#fbbc04" />
    <path d="M24 2a22 22 0 0 1 19.050 11H24a11 11 0 0 0-9.530 5.500L4.950 13A22 22 0 0 1 24 2z" fill="#ea4335" />
    <circle cx="24" cy="24" r="11" fill="#fff" /><circle cx="24" cy="24" r="8.500" fill="#4285f4" />
  </svg>
);
const Calc = () => (
  <svg width="24" height="30" viewBox="0 0 24 30">
    <rect width="24" height="30" rx="2" fill="#5b6b78" />
    <rect x="3" y="3" width="18" height="7" fill="#45c4e8" />
    {[0, 1, 2].flatMap(c => [0, 1, 2].map(r => <rect key={c + "" + r} x={3 + c * 6.200} y={12 + r * 5.500} width="5" height="4.500" fill={c === 2 && r > 0 ? "#1f3a5c" : "#dfe6ea"} />))}
  </svg>
);
const VSCode = () => (
  <svg width="30" height="30" viewBox="0 0 100 100">
    <path fill="#0065A9" d="M96.500 10.800 75.900.9c-2.400-1.200-5.200-.7-7.100 1.200L1.400 63.500c-1.800 1.700-1.800 4.500 0 6.200l5.500 5c1.500 1.300 3.700 1.400 5.300.2L93.400 13c2.700-2.100 6.600-.2 6.600 3.300v-.2c0-2.400-1.400-4.600-3.500-5.300z" />
    <path fill="#007ACC" d="M96.500 89.200 75.900 99.100c-2.400 1.200-5.200.7-7.100-1.200L1.400 36.500c-1.800-1.700-1.800-4.500 0-6.200l5.500-5c1.500-1.300 3.700-1.400 5.300-.2L93.400 87c2.700 2.100 6.600.2 6.600-3.300v.2c0 2.400-1.400 4.600-3.500 5.300z" />
    <path fill="#1F9CF0" d="M75.900 99.100c-2.400 1.200-5.200.7-7.100-1.200 2.300 2.300 6.200.7 6.200-2.600V4.700c0-3.300-3.900-4.900-6.200-2.600 1.900-1.900 4.700-2.400 7.100-1.200l20.600 9.900c2.100 1 3.500 3.200 3.500 5.600v67.200c0 2.400-1.400 4.600-3.500 5.600z" />
  </svg>
);
const Bell = () => (
  <svg width="16" height="24" viewBox="0 0 16 24" fill="#1c1c1c">
    <path d="M8 5c-3 0-5 2-5 6v4l-2 3h14l-2-3v-4c0-4-2-6-5-6zM6 20h4l-2 3z" />
    <path d="M9 1h5l-4 4h4" fill="none" stroke="#1c1c1c" strokeWidth="1" />
  </svg>
);
const CopilotArt = () => (
  <svg width="28" height="30" viewBox="0 0 28 30">
    <defs><linearGradient id="cp" x1="0" y1="0" x2="1" y2="1"><stop offset="0" stopColor="#27b0e8" /><stop offset=".45" stopColor="#7d6cf0" /><stop offset=".75" stopColor="#e85bb0" /><stop offset="1" stopColor="#f5b02e" /></linearGradient></defs>
    <path d="M9 0h11c2 0 3 1 4 3l3 13c1 5-2 9-6 9H8c-4 0-7-3-7-8C2 10 5 0 9 0z" fill="url(#cp)" />
    <path d="M11 6h7l3 12h-9z" fill="#f2e1d2" opacity=".55" />
  </svg>
);

const tabs = [
  { t: "Verify y", i: <Gmail /> },
  { t: "Intern I", i: <Drive /> },
  { t: "ChatGF", i: <OpenAiTile><SiOpenai size={16} /></OpenAiTile> },
  { t: "UI/UX I", i: <DotsTile /> },
  { t: "Ninja A", i: <NinjaIcon /> },
  { t: "Untitle", i: <FigmaColor /> },
  { t: "**Slide", i: <GoogleTile><FcGoogle size={18} /></GoogleTile> },
  { t: "Neha3", i: <FaGlobeAmericas size={18} color="#62676e" /> },
  { t: "Untitle", i: <FigmaColor />, active: true },
  { t: "Drafts", i: <FigmaColor /> },
  { t: "(31) W", i: <WaTile><FaWhatsapp size={16} /></WaTile> },
  { t: "nehade", i: <FaGithub size={19} color="#272c33" />, last: true },
];

const buttons = [
  { t: "Fan", x: 13, y: 110, h: 65, pl: 63, pt: 5, sel: true },
  { t: "AC", x: 13, y: 197, h: 63, pl: 65, pt: 5 },
  { t: "Lights", x: 13, y: 282, h: 61, pl: 65, pt: 5 },
  { t: "color", x: 13, y: 376, h: 58, pl: 45, pt: 10 },
];
const notes = [
  { t: "Range 1 to 5", x: 191, y: 116, w: 131, h: 53, pl: 28, pt: 1 },
  { t: "Range 16c to 30c", x: 193, y: 201, w: 129, h: 51, pl: 6 },
  { t: "Range 0%(off)\n100%(full)", x: 193, y: 292, w: 129, h: 46, pl: 14, pt: 3 },
  { t: "select the color\nof light", x: 202, y: 376, w: 120, h: 48, pl: 6, pb: 2 },
];

export default function App() {
  return (
    <Page>
      <Global />
      <TabStrip>
        <TabMenu><Chev c="#e6eaef" w={9} /></TabMenu>
        {tabs.map((tab, i) => (
          <Tab key={i} $active={tab.active} $sep={!tab.active && i !== 7}>
            <TabIcon>{tab.i}</TabIcon>
            <TabTitle>{tab.t}</TabTitle>
            <TabClose><X size={15} strokeWidth={1.8} /></TabClose>
          </Tab>
        ))}
        <NewTab><Plus size={19} strokeWidth={1.8} /></NewTab>
        <WindowControls>
          <Minus size={15} strokeWidth={1.4} />
          <Restore />
          <Thin s={14} />
        </WindowControls>
      </TabStrip>

      <Omni>
        <NavIcons>
          <ArrowLeft size={20} strokeWidth={1.6} />
          <ArrowRight size={20} strokeWidth={1.6} />
          <RotateCw size={18} strokeWidth={1.8} color="#c5ccd6" />
        </NavIcons>
        <AddressBar>
          <SiteChip><Tune /></SiteChip>
          <Url>figma.com/design/3lIScCQ8k5ENFrDAVGaf6q/Untitled?node-id=0-1&amp;t=bGTq1214YnNMjJDR-0</Url>
          <Star size={19} strokeWidth={1.7} color="#dfe3e8" />
        </AddressBar>
        <BrowserActions>
          <Puzzle />
          <ActionSep />
          <Avatar><Portrait /></Avatar>
          <MoreVertical size={20} strokeWidth={2} />
        </BrowserActions>
      </Omni>

      <FigmaBar>
        <Tools>
          <ToolCell $w={65} $pl={17} $gap={5}><FigmaLine /><Chev /></ToolCell>
          <ToolCell $w={60} $active $pl={17} $gap={8}><Cursor /><Chev /></ToolCell>
          <ToolCell $w={68} $pl={18} $gap={7}><FrameTool /><Chev /></ToolCell>
          <ToolCell $w={60} $pl={8} $gap={9}><RectTool /><Chev /></ToolCell>
          <ToolCell $w={59} $pl={9} $gap={8}><PenTool /><Chev /></ToolCell>
          <ToolCell $w={46} $pl={9}><TextTool /></ToolCell>
          <ToolCell $w={52} $pl={13}><ComponentsTool /></ToolCell>
          <ToolCell $w={50} $pl={10}><HandTool /></ToolCell>
          <ToolCell $w={40} $pl={7}><CommentTool /></ToolCell>
        </Tools>
        <Crumbs>
          <CrumbMuted>Drafts</CrumbMuted>
          <CrumbSlash>/</CrumbSlash>
          <CrumbTitle>Untitled</CrumbTitle>
          <FreeBadge>Free</FreeBadge>
          <Chev />
        </Crumbs>
        <RightTools>
          <UserPill><UserDot>N</UserDot><Chev /></UserPill>
          <ShareBtn>Share</ShareBtn>
          <CodeToggle><CodeKnob><CodeIcon /></CodeKnob></CodeToggle>
          <ToolCell $w={85} $pl={28}><Book c="#fff" /></ToolCell>
          <ToolCell $w={38} $pl={2} $gap={9}><PlayIcon /><Chev /></ToolCell>
          <AskBadge>A?</AskBadge>
          <ZoomText>100%</ZoomText>
          <Chev />
        </RightTools>
      </FigmaBar>

      <Workspace>
        <SidePanel $w={301} $left>
          <PanelHead $pl={23}>
            <Search size={16} strokeWidth={1.6} color="#1e1e1e" />
            <TabLabel $ml={11}>Layers</TabLabel>
            <TabLabel $on $ml={20}>Assets</TabLabel>
            <PageSelect>Page 1 <Chev c="#999" /></PageSelect>
          </PanelHead>
          <ToolRow $pl={21}><Placeholder>Search assets...</Placeholder><Book /></ToolRow>
          <ToolRow $pl={23}>
            <LibSelect>All libraries <Chev c="#999" /></LibSelect>
            <ListIcon />
          </ToolRow>
          <TreeHead $bold $h={46}><Caret />Local components</TreeHead>
          <AssetGrid $mt={14} $h={153}>
            <AssetCard>
              <AssetThumb><Toggle><Knob /></Toggle></AssetThumb>
              <AssetName>Toggle Switch</AssetName>
            </AssetCard>
          </AssetGrid>
          <TreeHead $bold $mt={37}><Caret />iOS 18 and iPadOS 18 <GlobeSmall /></TreeHead>
          <TreeHead $pl={20} $gap={6} $mt={18}><Caret />Examples</TreeHead>
          <TreeHead $pl={20} $gap={6} $mt={13}><Caret /><span><Faint>Examples / </Faint>Examples</span></TreeHead>
          <AssetGrid $mt={21} $h={139}>
            <AssetCard>
              <AssetThumb><IPad /></AssetThumb>
              <AssetName>Action Sheet - iP...</AssetName>
            </AssetCard>
            <AssetCard>
              <AssetThumb><IPhone /></AssetThumb>
              <AssetName>Action Sheet - iP...</AssetName>
            </AssetCard>
          </AssetGrid>
          <TipCard>
            <TipClose><Thin s={14} /></TipClose>
            <Book />
            <TipTitle>Reuse components across files</TipTitle>
            <div>Share your components with your</div>
            <div>team when you <TipLink>upgrade to a</TipLink></div>
            <div><TipLink>Professional plan</TipLink>.</div>
          </TipCard>
        </SidePanel>

        <Canvas>
          <FrameName $x={212} $y={68}>Fram...</FrameName>

          <ComponentLabel $x={123} $y={505}><Diamonds />Toggle Switch</ComponentLabel>
          <VariantSet $x={123} $y={532}>
            <DashOutline width="129" height="154" viewBox="0 0 129 154" fill="none">
              <rect x=".75" y=".75" width="127.500" height="152.500" rx="4" stroke="#ab6bff" strokeWidth="1.300" strokeDasharray="11 5" />
            </DashOutline>
            <Toggle><Knob /></Toggle>
            <Toggle $on><Knob /></Toggle>
          </VariantSet>
          <FlowLink />
          <FlowTag $x={256} $y={540}>Showcase <ShowcaseIcon /></FlowTag>
          <Node $x={369} $y={540}><Toggle><Knob /></Toggle></Node>

          <SideKey $x={495} $y={121} $h={45} />
          <SideKey $x={495} $y={203} $h={85} />
          <SideKey $x={495} $y={310} $h={84} />
          <SideKey $x={1030} $y={261} $h={133} $right />
          <Phone $x={497} $y={0}>
            <PhoneBlack>
              <Screen>
                <NavBar>
                  <NavBack><BackChevron />Label</NavBack>
                  <NavTitle>Title</NavTitle>
                  <NavTrash><Trash /></NavTrash>
                </NavBar>
                {buttons.map(b => (
                  <PresetBtn key={b.t} $x={b.x} $y={b.y} $h={b.h} $pl={b.pl} $pt={b.pt} $sel={b.sel}>{b.t}</PresetBtn>
                ))}
                {notes.map(n => (
                  <RangeNote key={n.t} $x={n.x} $y={n.y} $w={n.w} $h={n.h} $pl={n.pl} $pt={n.pt} $pb={n.pb}>{n.t}</RangeNote>
                ))}
              </Screen>
            </PhoneBlack>
          </Phone>

          <PreviewPopup $x={748} $y={520}>
            <PopupHead><Sliders /><Thin s={14} /></PopupHead>
            <PopupBody><Toggle $plain><Knob /></Toggle></PopupBody>
          </PreviewPopup>

          <Scrollbar $x={1303} $y={64} />
        </Canvas>

        <SidePanel $w={300}>
          <PanelHead $pl={20}>
            <TabLabel>Design</TabLabel>
            <TabLabel $on $ml={20}>Prototype</TabLabel>
          </PanelHead>
          <PropSection>
            <PropTitle>Device</PropTitle>
            <PropValue>None <Chev c="#999" /></PropValue>
          </PropSection>
          <PropSection>
            <PropTitle>Background</PropTitle>
            <PropValue $gap={10}><Swatch />000000</PropValue>
          </PropSection>
          <PropSection>
            <PropTitle>Flows</PropTitle>
            <PropValue>Showcase</PropValue>
          </PropSection>
          <HintHead $pt={20}>Removing a connection <Thin s={14} c="#1e1e1e" /></HintHead>
          <HintBody>
            <DeleteConn />
            <div>To delete a connection, click and<br />drag on either end.</div>
          </HintBody>
          <HintHead $pt={20}>Running your prototype <Thin s={14} c="#1e1e1e" /></HintHead>
          <HintBody>
            <HintIcon $ml={6} $mt={3}><PlayIcon c="#1e1e1e" w={12} h={15} /></HintIcon>
            <div>Use the play button in the toolbar<br />to play your prototype. If there<br />are no connections, the play<br />button can be used to play a<br />presentation of your frames.</div>
          </HintBody>
          <HelpBtn>?</HelpBtn>
        </SidePanel>
      </Workspace>

      <Taskbar>
        <NewsWidget>
          <NewsIcon><NewsGlyph /><NewsBadge>1</NewsBadge></NewsIcon>
          <NewsText>Finance headline<NewsSub>X hit with Austri...</NewsSub></NewsText>
        </NewsWidget>
        <WinLogo />
        <SearchPill>
          <Search size={20} strokeWidth={2} color="#222" />
          Search
          <PillArt><HandArt /></PillArt>
        </SearchPill>
        <TaskItems>
          <TaskItem $mr={3}><TaskView /></TaskItem>
          <TaskItem><Teams /></TaskItem>
          <TaskItem><Edge /></TaskItem>
          <TaskItem><ZoomTile>zoom</ZoomTile></TaskItem>
          <TaskItem $active><ChromeLogo /></TaskItem>
          <TaskItem><Calc /></TaskItem>
          <TaskItem $open><VSCode /></TaskItem>
        </TaskItems>
        <Tray>
          <ChevronUp size={18} strokeWidth={1.8} />
          <Lang>ENG<br />IN</Lang>
          <TrayGroup>
            <Wifi size={20} strokeWidth={1.7} />
            <Volume1 size={20} strokeWidth={1.6} />
            <BatteryCharging size={21} strokeWidth={1.5} />
          </TrayGroup>
          <Clock>12:34 PM<br />13-08-2024</Clock>
          <Bell />
          <Copilot><CopilotArt /><PreBadge>PRE</PreBadge></Copilot>
        </Tray>
      </Taskbar>
    </Page>
  );
}
